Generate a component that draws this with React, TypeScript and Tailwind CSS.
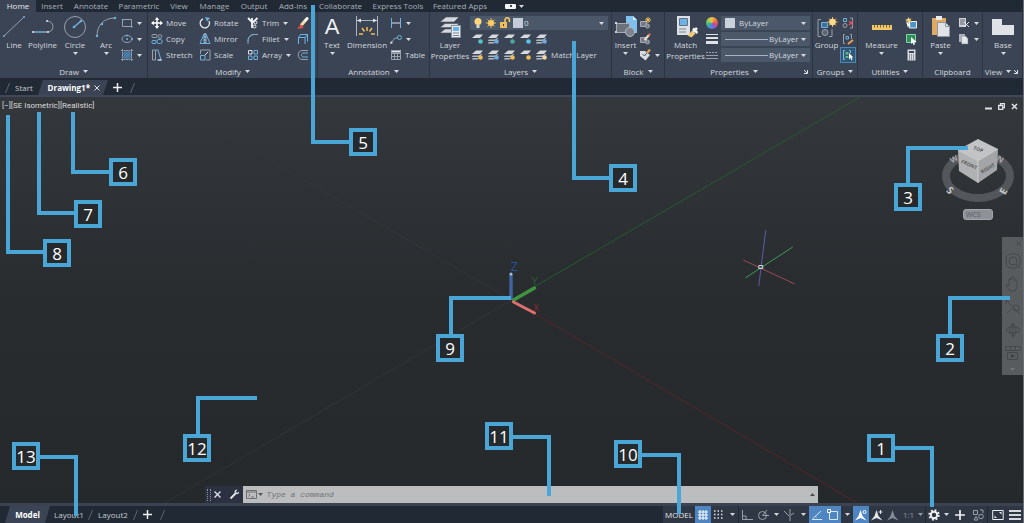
import React, { ReactNode } from 'react';

const BLUE = '#6fb3e0';
const LIGHT = '#dfe3e8';
const GREY = '#98a0ab';

interface IconProps {
  size?: number;
  w?: number;
  h?: number;
  children: ReactNode;
}

// Small wrapper, the viewBox always equals the drawn size
const Icon: React.FC<IconProps> = ({ size = 12, w, h, children }) => (
  <svg
    width={w ?? size}
    height={h ?? size}
    viewBox={`0 0 ${w ?? size} ${h ?? size}`}
    fill="none"
    stroke={LIGHT}
    strokeWidth={1}
    className="block shrink-0"
    aria-hidden="true"
  >
    {children}
  </svg>
);

const Caret: React.FC<{ className?: string }> = ({ className = '' }) => (
  <svg width="5" height="3" viewBox="0 0 5 3" className={`block shrink-0 ${className}`} aria-hidden="true">
    <path d="M0 0h5L2.5 3z" fill="#d5d9de" />
  </svg>
);

/* ---------- Draw ---------- */

const LineIcon = () => (
  <Icon size={24}>
    <path d="M2 21L22 2" stroke={GREY} />
    <circle cx="2" cy="21" r="1" fill={BLUE} stroke="none" />
    <circle cx="22" cy="2" r="1" fill={BLUE} stroke="none" />
  </Icon>
);

const PolylineIcon = () => (
  <Icon size={24}>
    <path d="M2 17h16c6-2 5-11-2-11" stroke={GREY} />
    <path d="M2 17h15" stroke={BLUE} />
    <circle cx="2" cy="17" r="1" fill={LIGHT} stroke="none" />
    <circle cx="16" cy="6" r="1" fill={LIGHT} stroke="none" />
    <circle cx="17" cy="17" r="1" fill={LIGHT} stroke="none" />
  </Icon>
);

const CircleIcon = () => (
  <Icon size={24}>
    <circle cx="12" cy="12" r="10.5" stroke={GREY} />
    <path d="M11 12l7-6" stroke={BLUE} strokeWidth="1.5" />
    <circle cx="11" cy="12" r="1.3" fill={BLUE} stroke="none" />
    <circle cx="18" cy="6" r="1.3" fill={BLUE} stroke="none" />
  </Icon>
);

const ArcIcon = () => (
  <Icon size={24}>
    <path d="M3 21C3 10 10 3 21 3" stroke={GREY} />
    <circle cx="3" cy="21" r="1.2" fill={BLUE} stroke="none" />
    <circle cx="8" cy="9" r="1.2" fill={BLUE} stroke="none" />
    <circle cx="21" cy="3" r="1.2" fill={BLUE} stroke="none" />
  </Icon>
);

const RectIcon = () => (
  <Icon>
    <path d="M1.5 2.5h9v7h-9z" stroke={GREY} />
    <path d="M1 2h1.5v1.5H1zM10 9h1.5v1.5H10z" fill={BLUE} stroke="none" />
  </Icon>
);

const EllipseIcon = () => (
  <Icon>
    <ellipse cx="6" cy="6" rx="5" ry="3.5" stroke={GREY} />
    <circle cx="6" cy="6" r="1" fill={BLUE} stroke="none" />
    <circle cx="11" cy="6" r="1" fill={BLUE} stroke="none" />
    <circle cx="6" cy="2.5" r="1" fill={BLUE} stroke="none" />
  </Icon>
);

const HatchIcon = () => (
  <Icon>
    <path d="M2.500 2.500h7v7h-7z" fill="#3f6d94" stroke="none" />
    <path d="M1.5 0v12M10.5 0v12M0 1.5h12M0 10.5h12" stroke={GREY} strokeDasharray="2 .5" />
    <path d="M2 5l3-3M2 8l6-6M2 10.5L10 2.500M4 10.500L10.500 4M7 10.500L10.500 7" stroke="#5c9bcb" strokeWidth=".7" />
  </Icon>
);

/* ---------- Modify ---------- */

const MoveIcon = () => (
  <Icon>
    <path d="M6 1v10M1 6h10" stroke="#fff" strokeWidth="1.5" />
    <path d="M6 0l2.200 3H3.800zM6 12l2.200-3H3.800zM0 6l3-2.200v4.400zM12 6L9 3.800v4.400z" fill="#fff" stroke="none" />
  </Icon>
);

const CopyIcon = () => (
  <Icon>
    <rect x="1" y="1.500" width="5" height="3" rx="1" stroke={GREY} />
    <rect x="1" y="7.500" width="4" height="3" rx="1" stroke={BLUE} />
    <circle cx="9" cy="3.500" r="1.800" stroke={GREY} />
    <rect x="6" y="6.500" width="5" height="4" rx="1.500" stroke={BLUE} />
  </Icon>
);

const StretchIcon = () => (
  <Icon>
    <path d="M1.500 1v10h3V1z" stroke={GREY} />
    <path d="M5 1l2 0 3 10H6" stroke={BLUE} />
    <path d="M7 11h4" stroke={LIGHT} />
  </Icon>
);

const RotateIcon = () => (
  <Icon>
    <path d="M4 1.800A4.700 4.700 0 1 0 10 4" stroke="#e7eaee" strokeWidth="1.300" />
    <path d="M6 0l5 1-3 3.500z" fill={BLUE} stroke="none" />
  </Icon>
);

const MirrorIcon = () => (
  <Icon>
    <path d="M5 1v9.500H1zM7 1v9.500h4z" stroke={BLUE} />
    <path d="M6 0v12" stroke={LIGHT} strokeDasharray="2 1" />
  </Icon>
);

const ScaleIcon = () => (
  <Icon>
    <path d="M1.500 5V1h9.500v10H7" stroke={GREY} />
    <path d="M1.500 6.500h4.500v4.500H1.500z" stroke={BLUE} />
    <path d="M6 6l3-3" stroke={LIGHT} />
  </Icon>
);

const TrimIcon = () => (
  <Icon>
    <path d="M1 1l4 4M5 1v10M10.500 1L5 6" stroke="#f2f4f6" strokeWidth="1.800" />
    <circle cx="8.500" cy="5.500" r="1.500" stroke="#f2f4f6" />
    <circle cx="7.500" cy="9.500" r="1.500" stroke="#f2f4f6" />
  </Icon>
);

const FilletIcon = () => (
  <Icon>
    <path d="M1 11V8c0-4 3-6.500 6-6.500h4" stroke={GREY} />
    <path d="M1 8c0-4 3-6.500 6-6.500" stroke={BLUE} />
  </Icon>
);

const ArrayIcon = () => (
  <Icon>
    <path d="M1.500 1.500h3.500v3.500H1.500z" stroke={LIGHT} />
    <path d="M7 1.500h3.500v3.500H7zM1.500 7h3.500v3.500H1.500zM7 7h3.500v3.500H7z" stroke={BLUE} />
  </Icon>
);

const EraseIcon = () => (
  <Icon>
    <path d="M4 8.500L10.500 1" stroke="#f4dfae" strokeWidth="3" />
    <path d="M8 4L11 .5" stroke="#fff" strokeWidth="2" />
    <path d="M0 11.500h5.500L6.500 9 4 7.500z" fill="#d9534a" stroke="none" />
  </Icon>
);

const ExplodeIcon = () => (
  <Icon>
    <path d="M1.500 4.500h6.500v6.500M1.500 4.500V11M1.500 4.500l2-3h7l-2.500 3M10.500 1.500v7" stroke={BLUE} />
  </Icon>
);

const OffsetIcon = () => (
  <Icon>
    <path d="M11 1.500H5c-5 0-5 9 0 9h6" stroke={GREY} />
    <path d="M11 4H6c-2 0-2 4 0 4h5" stroke={BLUE} />
  </Icon>
);

/* ---------- Annotation ---------- */

const DimensionIcon = () => (
  <Icon w={26} h={24}>
    <path d="M2.500 1v20M23.500 1v20M3 5.500h20" stroke="#aeb5be" />
    <path d="M3 5.500l4-2v4zM23 5.500l-4-2v4z" fill={LIGHT} stroke="none" />
    <path d="M13 12v4M8 13l2.500 3.500M18 13l-2.500 3.500M5 19l4 0M21 19l-4 0" stroke="#f2bd55" strokeWidth="1.500" />
  </Icon>
);

const LinearDimIcon = () => (
  <Icon>
    <path d="M1.500 1v10M10.500 1v10" stroke={BLUE} />
    <path d="M2 6h8" stroke={LIGHT} />
  </Icon>
);

const LeaderIcon = () => (
  <Icon>
    <path d="M1 10l4-5h3" stroke={GREY} />
    <circle cx="9.500" cy="4.500" r="2" stroke={BLUE} />
    <path d="M0 11l1-3 2 2z" fill={LIGHT} stroke="none" />
  </Icon>
);

const TableIcon = () => (
  <Icon>
    <path d="M1 1h10v2.500H1z" fill={LIGHT} stroke="none" />
    <path d="M1.500 1.500h9v9h-9zM1.500 4.500h9M1.500 7.500h9M4.500 4v6.500M7.500 4v6.500" stroke={GREY} />
  </Icon>
);

/* ---------- Layers ---------- */

const LayerPropsIcon = () => (
  <Icon size={24}>
    <path d="M2 18l5-4h14l-4 4zM2 12.500l5-4h14l-4 4zM2 7l6-5h13l-5 5z" fill="#d6d9dd" stroke="#4b5260" strokeWidth=".6" />
    <path d="M13.500 10.500h9v12h-9z" fill="#e9edf1" stroke="#8b939e" />
    <path d="M15 12h6v4h-6z" fill="#68b4e8" stroke="none" />
    <path d="M15 18h6M15 20.500h6" stroke="#7b838e" />
  </Icon>
);

const BulbIcon = () => (
  <Icon w={10} h={12}>
    <circle cx="5" cy="4.500" r="3.500" fill="#ffd67a" stroke="none" />
    <path d="M3.500 8h3v3h-3z" fill="#d8d8d8" stroke="none" />
  </Icon>
);

const SunIcon = () => (
  <Icon>
    <path d="M6 1v10M1 6h10M2.500 2.500l7 7M9.500 2.500l-7 7" stroke="#f2bd55" />
    <circle cx="6" cy="6" r="3" fill="#ffcf66" stroke="none" />
  </Icon>
);

const LockIcon = () => (
  <Icon>
    <path d="M6 5.500V3a2.200 2.200 0 0 1 4.400 0v2" stroke="#ffcf66" strokeWidth="1.500" />
    <path d="M1 5h7v6H1z" fill="#f2bd55" stroke="none" />
    <path d="M4 7h1v2H4z" fill="#3b4454" stroke="none" />
  </Icon>
);

const LayerIcon: React.FC<{ accent: string; stacked?: boolean }> = ({ accent, stacked }) => (
  <Icon>
    <path d="M0 5l4-3.500h7L8 5z" fill="#d6d9dd" stroke="none" />
    {stacked && <path d="M0 7.500l1-1h6l3-2v1L7.500 8H0zM0 10l1-1h5v1.500H0z" fill="#b4bac2" stroke="none" />}
    <circle cx="8.500" cy="8.500" r="2.300" fill={accent} stroke="none" />
  </Icon>
);

/* ---------- Block, Properties, Groups ... ---------- */

const InsertIcon = () => (
  <Icon size={24}>
    <path d="M12 1h7l4 4v13H12z" fill="#7fc1ee" stroke="none" />
    <path d="M19 1l4 4h-4z" fill="#d2ebfb" stroke="none" />
    <path d="M2.500 8.500h13v9h-13z" fill="#6d737d" stroke="#a6acb4" />
    <circle cx="16" cy="17" r="4.500" fill="#7d838c" stroke="#b6bbc2" />
    <path d="M1 7h2v2H1zM1 16h2v2H1z" fill="#d0d4d9" stroke="none" />
  </Icon>
);

const CreateBlockIcon = () => (
  <Icon>
    <path d="M1.500 4.500h6v5h-6z" fill="#747b86" stroke="#a6acb4" />
    <circle cx="8.500" cy="9" r="2" fill="#747b86" stroke="#a6acb4" />
    <path d="M9 0v6M6 3h6M7 1l4 4M11 1L7 5" stroke="#f2bd55" />
  </Icon>
);

const EditBlockIcon = () => (
  <Icon>
    <path d="M1.500 4.500h6v5h-6z" fill="#747b86" stroke="#a6acb4" />
    <circle cx="8.500" cy="9" r="2" fill="#747b86" stroke="#a6acb4" />
    <path d="M5.500 7L10 2" stroke="#f1e3c8" strokeWidth="2" />
    <path d="M9.500 2.500L11.200.7" stroke="#e0704a" strokeWidth="2" />
  </Icon>
);

const TagIcon = () => (
  <Icon>
    <path d="M1 2h5l5 4-4.500 5.500L1 7z" fill="#d9dde2" stroke="none" />
    <path d="M3.500 5l2 2 3-4" stroke="#4a515e" />
    <path d="M8 4l3-3.500" stroke="#f2a94b" strokeWidth="2" />
  </Icon>
);

const MatchPropsIcon = () => (
  <Icon size={24}>
    <path d="M3 1h13v19H3z" fill="#dde1e5" stroke="none" />
    <path d="M5.500 3.500h8v7h-8z" fill="#6ab3e6" stroke="#66707c" />
    <path d="M5 14h7M5 17h7" stroke="#7b838e" />
    <path d="M18 18l5-5M19 13.500l4.500 4.500" stroke="#f3f3f3" strokeWidth="2.500" />
    <path d="M13.500 20.500l5-5 3 3-4 4z" fill="#f0c878" stroke="none" />
  </Icon>
);

const WheelIcon = () => (
  <span className="block size-3 rounded-full bg-[conic-gradient(#f2c14b,#ec7b3c,#d94b7b,#8a5bd0,#3f8fe0,#3fb98a,#a9cf4a,#f2c14b)]" />
);

const WeightIcon = () => (
  <Icon>
    <path d="M0 1.500h12" strokeWidth="1" />
    <path d="M0 5h12" strokeWidth="2" />
    <path d="M0 9.500h12" strokeWidth="3" />
  </Icon>
);

const LinetypeIcon = () => (
  <Icon>
    <path d="M0 3.500h12" strokeDasharray="2 1" stroke={GREY} />
    <path d="M0 6.500h12M0 9.500h12" stroke={GREY} />
  </Icon>
);

const GroupIcon = () => (
  <Icon size={24}>
    <path d="M6 4.500H3v17h3M14 21.500h3V14" stroke={GREY} />
    <path d="M6.500 7.500h6v5h-6z" fill="#3d6f9c" stroke={BLUE} />
    <circle cx="10" cy="17.500" r="3" fill="#5d6470" stroke={GREY} />
    <path d="M17.500 2v10M12.500 7h10M14 3.500l7 7M21 3.500l-7 7" stroke="#f2bd55" />
    <circle cx="17.500" cy="7" r="3.300" fill="#ffd98a" stroke="none" />
  </Icon>
);

const UngroupIcon = () => (
  <Icon>
    <path d="M1.500 1.500h3v3h-3z" stroke={BLUE} />
    <circle cx="3" cy="8.500" r="2" stroke={GREY} />
    <path d="M8 1h2.500v10H8" stroke={GREY} />
    <path d="M7 4l4 4M11 4L7 8" stroke="#e0525c" strokeWidth="1.300" />
  </Icon>
);

const GroupEditIcon = () => (
  <Icon>
    <path d="M3 1.500H1.500v9H3M8 1.500h1.500V6" stroke={GREY} />
    <path d="M4 3.500h2.500V6H4z" stroke={BLUE} />
    <path d="M6 11l5-4" stroke="#e69a5a" strokeWidth="2" />
  </Icon>
);

const GroupSelectIcon = () => (
  <Icon>
    <path d="M3 1.500H1.500v9H3M7 1.500h1.500V4" stroke="#8fb9d6" />
    <path d="M3.500 3h3v2.500h-3zM3.500 7h3v2h-3z" fill="#5cba8a" stroke="none" />
    <path d="M7 4l4.500 4.500H9.500l1 2.500-1 .5-1-2.500L7 10.500z" fill="#fff" stroke="none" />
  </Icon>
);

const MeasureIcon = () => (
  <Icon w={24} h={24}>
    <path d="M2 10h20v5H2z" fill="#f2c766" stroke="none" />
    <path d="M4.500 10v2.500M7.500 10v2.500M10.500 10v2.500M13.500 10v2.500M16.500 10v2.500M19.500 10v2.500" stroke="#7a6330" />
  </Icon>
);

const QuickSelectIcon = () => (
  <Icon>
    <path d="M4.500 4.500h7v6.500h-7z" fill="#4b95c9" stroke="#eef0f3" />
    <path d="M1 4l5 4.500H4l-1 2.500z" fill="#fff" stroke="none" />
    <path d="M3.500 0l1 2 2-.5L5.500 3.500l1.500 2-2.500-.5L3 6.500l-.5-2.500L0 3l2.500-1z" fill="#f5cf78" stroke="none" />
  </Icon>
);

const SelectAllIcon = () => (
  <Icon>
    <path d="M1.500 1.500h9v8h-9z" fill="#2f8f58" stroke="#7fd6a1" />
    <path d="M6 4l5.500 5H9l1 2.500-1.500.5-1-2.500L6 11z" fill="#fff" stroke="none" />
  </Icon>
);

const CalcIcon = () => (
  <Icon>
    <path d="M2.500.5h8v11h-8z" fill="#d9dde2" stroke="none" />
    <path d="M4 2h5v2H4z" fill="#3f4856" stroke="none" />
    <path d="M4 6h5M4 8h5M4 10h5" stroke="#4a515e" strokeDasharray="1 1" />
  </Icon>
);

const PasteIcon = () => (
  <Icon size={24}>
    <path d="M3 3h14v17H3z" fill="#e0aa62" stroke="none" />
    <path d="M7 1h6v4H7z" fill="#e7eaee" stroke="none" />
    <path d="M8.500 7.500h8l4 4v10h-12z" fill="#dfe2e6" stroke="#8f969f" />
    <path d="M16.500 7.500v4h4" stroke="#8f969f" />
  </Icon>
);

const CutIcon = () => (
  <Icon>
    <path d="M1 1h7v9H1z" fill="#cfd3d8" stroke="none" />
    <path d="M2 3h5M2 5h5M2 7h5" stroke="#5a616d" />
    <path d="M6 5l5 5M11 5l-5 5" stroke="#eef0f3" />
  </Icon>
);

const CopyClipIcon = () => (
  <Icon>
    <path d="M1 1h6v8H1z" fill="#aeb4bc" stroke="none" />
    <path d="M3.500 3h4l2.500 2.500V11H3.500z" fill="#e3e6ea" stroke="#6b727d" strokeWidth=".5" />
  </Icon>
);

const BaseIcon = () => (
  <Icon size={24}>
    <path d="M1 4h10v6h12v10H1z" fill="#dfe2e6" stroke="none" />
  </Icon>
);

/* ---------- Ribbon building blocks ---------- */

interface BigButtonProps {
  icon: ReactNode;
  label: string;
  second?: string;
  caret?: boolean;
  className?: string;
}

const BigButton: React.FC<BigButtonProps> = ({ icon, label, second, caret, className = '' }) => (
  <button type="button" className={`flex shrink-0 flex-col items-center leading-[11px] whitespace-nowrap ${className}`}>
    {icon}
    <span>{label}</span>
    {second && <span>{second}</span>}
    {caret && <Caret className="mt-0.5" />}
  </button>
);

interface ToolProps {
  icon: ReactNode;
  name: string;
  label?: string;
  caret?: boolean;
}

const Tool: React.FC<ToolProps> = ({ icon, name, label, caret }) => (
  <button type="button" aria-label={name} className="flex h-4 items-center gap-[3px] whitespace-nowrap">
    {icon}
    {label && <span>{label}</span>}
    {caret && <Caret className="ml-px" />}
  </button>
);

interface PanelProps {
  title: string;
  caret?: boolean;
  launcher?: boolean;
  className: string;
  children: ReactNode;
}

const Panel: React.FC<PanelProps> = ({ title, caret = true, launcher, className, children }) => (
  <section className={`flex flex-col border-r border-[#2c3441] ${className}`}>
    <div className="flex h-[53px] pt-[3px]">{children}</div>
    <div className="flex h-[13px] items-center">
      <button type="button" className="flex flex-1 items-center justify-center gap-1">
        {title}
        {caret && <Caret />}
      </button>
      {launcher && (
        <button type="button" aria-label={`${title} settings`} className="mr-1">
          <Icon size={5}>
            <path d="M1 1l3 3M4.500 1v3.500H1" />
          </Icon>
        </button>
      )}
    </div>
  </section>
);

interface PropertySelectProps {
  name: string;
  className: string;
  children?: ReactNode;
}

const PropertySelect: React.FC<PropertySelectProps> = ({ name, className, children }) => (
  <label className="relative flex h-4 items-center">
    <select
      aria-label={name}
      className={`h-[14px] w-full appearance-none bg-[#4b586a] text-[8px] leading-[14px] outline-none ${className}`}
    >
      <option>ByLayer</option>
    </select>
    {children}
    <Caret className="pointer-events-none absolute right-1" />
  </label>
);

const menuTabs: { name: string; className: string }[] = [
  { name: 'Insert', className: 'w-[32px]' },
  { name: 'Annotate', className: 'w-[46px]' },
  { name: 'Parametric', className: 'w-[50px]' },
  { name: 'View', className: 'w-[30px]' },
  { name: 'Manage', className: 'w-[41px]' },
  { name: 'Output', className: 'w-[38px]' },
  { name: 'Add-ins', className: 'w-[40px]' },
  { name: 'Collaborate', className: 'w-[55px]' },
  { name: 'Express Tools', className: 'w-[60px]' },
  { name: 'Featured Apps', className: 'w-[64px]' },
];

const MenuTabs = () => (
  <nav className="flex h-3 items-center bg-[#212934] text-[#a9b0ba]">
    <a href="#home" className="flex h-3 w-9 items-center justify-center bg-[#3b4454] text-[#e6e9ed]">
      Home
    </a>
    {menuTabs.map((tab) => (
      <a key={tab.name} href={`#${tab.name}`} className={`text-center whitespace-nowrap ${tab.className}`}>
        {tab.name}
      </a>
    ))}
    <button type="button" aria-label="Ribbon display" className="ml-[13px] flex items-center gap-[3px]">
      <span className="flex h-[5px] w-[11px] items-center justify-center rounded-[1px] bg-[#f2f4f6]">
        <span className="size-[2px] bg-[#3b4454]" />
      </span>
      <Caret />
    </button>
  </nav>
);

const Ribbon = () => (
  <div className="flex h-[66px] bg-[#3b4454] text-[#d3d8de]">
    <Panel title="Draw" className="w-[148px]">
      <BigButton icon={<LineIcon />} label="Line" className="w-7" />
      <BigButton icon={<PolylineIcon />} label="Polyline" className="w-[29px]" />
      <BigButton icon={<CircleIcon />} label="Circle" caret className="w-9" />
      <BigButton icon={<ArcIcon />} label="Arc" caret className="w-[26px]" />
      <div className="ml-0.5 flex flex-col">
        <Tool icon={<RectIcon />} name="Rectangle" caret />
        <Tool icon={<EllipseIcon />} name="Ellipse" caret />
        <Tool icon={<HatchIcon />} name="Hatch" caret />
      </div>
    </Panel>

    <Panel title="Modify" className="w-[170px]">
      <div className="ml-[3px] grid grid-cols-[48px_48px_50px_12px] content-start">
        <Tool icon={<MoveIcon />} name="Move" label="Move" />
        <Tool icon={<RotateIcon />} name="Rotate" label="Rotate" />
        <Tool icon={<TrimIcon />} name="Trim" label="Trim" caret />
        <Tool icon={<EraseIcon />} name="Erase" />
        <Tool icon={<CopyIcon />} name="Copy" label="Copy" />
        <Tool icon={<MirrorIcon />} name="Mirror" label="Mirror" />
        <Tool icon={<FilletIcon />} name="Fillet" label="Fillet" caret />
        <Tool icon={<ExplodeIcon />} name="Explode" />
        <Tool icon={<StretchIcon />} name="Stretch" label="Stretch" />
        <Tool icon={<ScaleIcon />} name="Scale" label="Scale" />
        <Tool icon={<ArrayIcon />} name="Array" label="Array" caret />
        <Tool icon={<OffsetIcon />} name="Offset" />
      </div>
    </Panel>

    <Panel title="Annotation" className="w-[112px]">
      <BigButton
        icon={<span className="h-6 font-['Liberation_Sans',sans-serif] text-[22px] leading-6 text-[#eef0f3]">A</span>}
        label="Text"
        caret
        className="w-7"
      />
      <BigButton icon={<DimensionIcon />} label="Dimension" className="w-[42px]" />
      <div className="ml-0.5 flex flex-col">
        <Tool icon={<LinearDimIcon />} name="Linear" caret />
        <Tool icon={<LeaderIcon />} name="Leader" caret />
        <Tool icon={<TableIcon />} name="Table" label="Table" />
      </div>
    </Panel>

    <Panel title="Layers" className="w-[182px]">
      <BigButton icon={<LayerPropsIcon />} label="Layer" second="Properties" className="w-10" />
      <div className="mr-[3px] flex flex-1 flex-col">
        <label className="relative flex h-4 items-center">
          <select
            aria-label="Current layer"
            className="h-[14px] w-full appearance-none bg-[#4b586a] pl-[54px] text-[8px] leading-[14px] outline-none"
          >
            <option>0</option>
          </select>
          <span className="pointer-events-none absolute left-[3px] flex items-center gap-[2px]">
            <BulbIcon />
            <SunIcon />
            <LockIcon />
            <span className="size-[10px] bg-[#c3ccd8]" />
          </span>
          <Caret className="pointer-events-none absolute right-1" />
        </label>
        <div className="ml-0.5 flex gap-1">
          <Tool icon={<LayerIcon accent="#56c5c9" />} name="Layer off" />
          <Tool icon={<LayerIcon accent="#6fa9dc" stacked />} name="Isolate" />
          <Tool icon={<LayerIcon accent="#4fa89c" />} name="Freeze" />
          <Tool icon={<LayerIcon accent="#56c5e9" />} name="Lock" />
          <Tool icon={<LayerIcon accent="#6fa9dc" stacked />} name="Make current" />
        </div>
        <div className="ml-0.5 flex gap-1">
          <Tool icon={<LayerIcon accent="#f2bd55" stacked />} name="Layers on" />
          <Tool icon={<LayerIcon accent="#6fa9dc" stacked />} name="Unisolate" />
          <Tool icon={<LayerIcon accent="#f2bd55" stacked />} name="Thaw" />
          <Tool icon={<LayerIcon accent="#f2bd55" />} name="Unlock" />
          <Tool icon={<LayerIcon accent="#f0d9a0" stacked />} name="Match Layer" label="Match Layer" />
        </div>
      </div>
    </Panel>

    <Panel title="Block" className="w-[53px]">
      <BigButton icon={<InsertIcon />} label="Insert" caret className="w-[27px]" />
      <div className="flex flex-col">
        <Tool icon={<CreateBlockIcon />} name="Create block" />
        <Tool icon={<EditBlockIcon />} name="Edit block" />
        <Tool icon={<TagIcon />} name="Edit attributes" caret />
      </div>
    </Panel>

    <Panel title="Properties" launcher className="w-[148px]">
      <BigButton icon={<MatchPropsIcon />} label="Match" second="Properties" className="w-[41px]" />
      <div className="grid flex-1 grid-cols-[15px_1fr] content-start items-center pr-0.5">
        <WheelIcon />
        <PropertySelect name="Object color" className="pl-[18px]">
          <span className="pointer-events-none absolute left-1 size-[10px] bg-[#cbd2dc]" />
        </PropertySelect>
        <WeightIcon />
        <PropertySelect name="Lineweight" className="pl-12">
          <span className="pointer-events-none absolute left-1 h-px w-[43px] bg-[#aab2bd]" />
        </PropertySelect>
        <LinetypeIcon />
        <PropertySelect name="Linetype" className="pl-12">
          <span className="pointer-events-none absolute left-1 h-px w-[43px] bg-[#aab2bd]" />
        </PropertySelect>
      </div>
    </Panel>

    <Panel title="Groups" className="w-[45px]">
      <BigButton icon={<GroupIcon />} label="Group" className="w-[27px]" />
      <div className="flex flex-col items-center">
        <Tool icon={<UngroupIcon />} name="Ungroup" />
        <Tool icon={<GroupEditIcon />} name="Group edit" />
        <button
          type="button"
          aria-label="Group selection"
          className="flex size-4 items-center justify-center border border-[#4d87b3] bg-[#2f5878]"
        >
          <GroupSelectIcon />
        </button>
      </div>
    </Panel>

    <Panel title="Utilities" className="w-[65px]">
      <BigButton icon={<MeasureIcon />} label="Measure" caret className="w-[47px]" />
      <div className="flex flex-col">
        <Tool icon={<QuickSelectIcon />} name="Quick select" />
        <Tool icon={<SelectAllIcon />} name="Select all" />
        <Tool icon={<CalcIcon />} name="Calculator" />
      </div>
    </Panel>

    <Panel title="Clipboard" caret={false} className="w-[60px]">
      <BigButton icon={<PasteIcon />} label="Paste" caret className="w-[35px]" />
      <div className="flex flex-col">
        <Tool icon={<CutIcon />} name="Cut" caret />
        <Tool icon={<CopyClipIcon />} name="Copy clip" caret />
      </div>
    </Panel>

    <Panel title="View" launcher className="min-w-10 flex-1">
      <BigButton icon={<BaseIcon />} label="Base" caret className="w-10" />
    </Panel>
  </div>
);

const Slash = () => (
  <Icon w={5} h={12}>
    <path d="M4.500 1L.5 11" stroke="#5d6573" />
  </Icon>
);

const PlusIcon = () => (
  <Icon size={9}>
    <path d="M4.500 0v9M0 4.500h9" stroke="#eef0f3" strokeWidth="1.500" />
  </Icon>
);

const FileTabs = () => (
  <div className="flex h-[19px] items-center border-b-2 border-[#40475a] bg-[#212934] pt-0.5 text-[#c5cad1]">
    <span className="ml-[5px]">
      <Slash />
    </span>
    <button type="button" className="w-7 text-center">
      Start
    </button>
    <div className="flex h-[15px] w-[70px] items-center justify-end gap-1 bg-[#3b4454] pr-2 [clip-path:polygon(5px_0,100%_0,calc(100%-5px)_100%,0_100%)]">
      <button type="button" className="font-bold text-white">
        Drawing1*
      </button>
      <button type="button" aria-label="Close drawing">
        <Icon size={6}>
          <path d="M.5.5l5 5M5.500.5l-5 5" />
        </Icon>
      </button>
    </div>
    <button type="button" aria-label="New drawing" className="mr-2 ml-[5px]">
      <PlusIcon />
    </button>
    <Slash />
  </div>
);

/* ---------- Drawing area ---------- */

const Scene = () => (
  <svg viewBox="0 97 1024 406" preserveAspectRatio="none" className="absolute inset-0 size-full" fill="none" aria-hidden="true">
    <path d="M512 300L160 97M512 300L165 503" stroke="#34393c" strokeWidth=".7" />
    <path d="M512 300L861 97" stroke="#245a2f" strokeWidth="1" />
    <path d="M512 300L858 503" stroke="#57242b" strokeWidth="1" />
    <path d="M511.500 300v-26" stroke="#41639f" strokeWidth="3.500" />
    <circle cx="511.500" cy="274" r="1.500" fill="#a9bfe0" />
    <path d="M514 300l21-12" stroke="#3f9440" strokeWidth="3.500" strokeLinecap="round" />
    <path d="M514 302l21 11" stroke="#e06f70" strokeWidth="3" strokeLinecap="round" />
    <g fontFamily="Open Sans, sans-serif">
      <text x="511" y="271" fontSize="13" fill="#26529a">Z</text>
      <text x="532" y="285" fontSize="11" fill="#28602c">Y</text>
      <text x="534" y="311" fontSize="9" fill="#8c2a30">X</text>
    </g>
    <path d="M766.500 230l-7 56" stroke="#5c5ca8" />
    <path d="M746 278l47.500-31" stroke="#3f9a58" />
    <path d="M744 260l51.500 24" stroke="#9a4a55" />
    <path d="M759.500 265.500h4v3h-4z" stroke="#d4d6d8" />
  </svg>
);

const ViewCube = () => (
  <svg width="76" height="68" viewBox="0 0 76 68" fill="none" aria-label="View cube">
    <ellipse cx="38" cy="38" rx="32" ry="22" stroke="#53565a" strokeWidth="8" />
    <g fontFamily="Open Sans, sans-serif" fontWeight="700" fill="#a6a8ab">
      <text x="10" y="24" fontSize="8" transform="rotate(-30 14 21)">W</text>
      <text x="57" y="24" fontSize="8" transform="rotate(30 60 21)">N</text>
      <text x="7" y="56" fontSize="10" fill="#c4c6c8" transform="rotate(40 10 53)">S</text>
      <text x="60" y="57" fontSize="10" fill="#c4c6c8" transform="rotate(-60 63 53)">E</text>
    </g>
    <path d="M18 12L38 1l20 10-20 12z" fill="#c2c3c4" />
    <path d="M18 12l20 11v22L19 33z" fill="#b0b1b2" />
    <path d="M58 11L38 23v22l19-13z" fill="#a3a4a6" />
    <path d="M18 12l20 11 20-12M38 23v22" stroke="#d3d4d5" strokeWidth=".8" />
    <g fontFamily="Open Sans, sans-serif" fontWeight="700" fontSize="5" fill="#5a5c5f">
      <text x="33" y="13" transform="rotate(20 38 12)">TOP</text>
      <text x="20" y="28" transform="rotate(24 28 28)">FRONT</text>
      <text x="40" y="32" transform="rotate(-30 48 30)">RIGHT</text>
    </g>
  </svg>
);

const NavBar = () => (
  <div className="absolute top-[140px] right-0 flex h-[138px] w-[21px] flex-col items-center justify-between bg-[#595c5f] py-1">
    <button type="button" aria-label="Close navigation bar" className="self-end pr-0.5">
      <Icon size={5}>
        <path d="M.5.5l4 4M4.500.5l-4 4" stroke="#3f4245" />
      </Icon>
    </button>
    <button type="button" aria-label="Steering wheel">
      <Icon size={16}>
        <rect x="1" y="1" width="14" height="14" rx="5" stroke="#45484b" />
        <circle cx="8" cy="8" r="4" stroke="#45484b" />
        <path d="M11 11l4 4" stroke="#45484b" />
      </Icon>
    </button>
    <button type="button" aria-label="Pan">
      <Icon size={16}>
        <path d="M5 15c-2-3-4-5-4-6s2-1 3 1V4c0-1.500 2-1.500 2 0V2c0-1.500 2-1.500 2 0v1c0-1.500 2-1.500 2 0v2c0-1.500 2-1.500 2 0v6l-2 4z" stroke="#45484b" />
      </Icon>
    </button>
    <button type="button" aria-label="Zoom">
      <Icon size={16}>
        <path d="M1 1l14 14M1 5V1h4M2 14l4-4" stroke="#45484b" />
        <circle cx="11" cy="9" r="3" stroke="#45484b" />
      </Icon>
    </button>
    <button type="button" aria-label="Orbit">
      <Icon size={16}>
        <path d="M8 1v14M6 3l2-2 2 2M6 13l2 2 2-2" stroke="#45484b" />
        <ellipse cx="8" cy="8" rx="7" ry="3" stroke="#45484b" />
        <ellipse cx="8" cy="8" rx="3" ry="5" stroke="#45484b" />
      </Icon>
    </button>
    <button type="button" aria-label="Show motion">
      <Icon size={16}>
        <path d="M.5 1.500h15v4H.5zM5.500 1.500v4M10.500 1.500v4M2.500 7.500h10v7h-10z" stroke="#45484b" />
        <path d="M6 9l4 2-4 2z" fill="#3a3d40" stroke="none" />
      </Icon>
    </button>
    <Caret className="opacity-20" />
  </div>
);

const CommandLine = () => (
  <form className="absolute bottom-0 left-1/5 flex h-[17px] w-3/5 items-center bg-[#2b3140]">
    <span className="ml-0.5 h-3 w-1 border-x border-dotted border-[#8d949e]" />
    <button type="button" aria-label="Close command line" className="ml-[3px]">
      <Icon size={7}>
        <path d="M.5.5l6 6M6.500.5l-6 6" strokeWidth="1.300" />
      </Icon>
    </button>
    <button type="button" aria-label="Customize" className="ml-2">
      <Icon size={11}>
        <path d="M1.500 9.500l5-5" strokeWidth="2" />
        <path d="M10 2.500L8 4 6.800 2.800 8.500.8C6 0 4.800 2.500 6 4.500 8 6 10.500 5 10 2.500z" fill={LIGHT} stroke="none" />
      </Icon>
    </button>
    <label className="ml-[3px] flex h-full flex-1 items-center bg-[#bcbdbf] pl-[3px]">
      <Icon w={11} h={9}>
        <path d="M.5.5h10v8H.5z" stroke="#6c6e71" />
        <path d="M1 2h9M2.500 4l1.500 1.200L2.500 6.500M5 7h3" stroke="#6c6e71" />
      </Icon>
      <svg width="5" height="3" viewBox="0 0 5 3" className="ml-px" aria-hidden="true">
        <path d="M0 0h5L2.500 3z" fill="#55575a" />
      </svg>
      <input
        type="text"
        aria-label="Command"
        placeholder="Type a command"
        className="ml-1 min-w-0 flex-1 bg-transparent font-['Liberation_Mono',monospace] text-[8px] text-[#444] italic outline-none placeholder:text-[#737476]"
      />
      <svg width="5" height="3" viewBox="0 0 5 3" className="mr-[3px]" aria-hidden="true">
        <path d="M0 3h5L2.500 0z" fill="#4a4c4f" />
      </svg>
    </label>
  </form>
);

const Viewport = () => (
  <main className="relative min-h-[300px] flex-1 bg-linear-to-b from-[#34373b] via-[#282c2f] via-50% to-[#25292b]">
    <Scene />
    <div className="relative flex items-center justify-between px-0.5 pt-[3px] pr-[5px] text-[#d9dbdd]">
      <span className="font-['Roboto',sans-serif]">[−][SE Isometric][Realistic]</span>
      <div className="flex items-center gap-1.5">
        <button type="button" aria-label="Minimize">
          <Icon size={7}>
            <path d="M0 5.500h7" strokeWidth="2" />
          </Icon>
        </button>
        <button type="button" aria-label="Restore">
          <Icon size={7}>
            <path d="M2.500 2V.7h4v4H5M.7 2.500h4v4h-4z" strokeWidth="1.300" />
          </Icon>
        </button>
        <button type="button" aria-label="Close">
          <Icon size={7}>
            <path d="M1 1l5 5M6 1L1 6" strokeWidth="1.500" />
          </Icon>
        </button>
      </div>
    </div>
    <div className="absolute top-[41px] right-[7px] flex flex-col items-center gap-[3px]">
      <ViewCube />
      <button
        type="button"
        className="h-[11px] w-[30px] rounded-[3px] border border-[#a5a7ad] bg-[#8e9197] pl-0.5 text-left text-[7px] leading-[9px] text-[#5a5d63]"
      >
        WCS
      </button>
    </div>
    <NavBar />
    <CommandLine />
  </main>
);

/* ---------- Status bar ---------- */

interface StatusButtonProps {
  name: string;
  className?: string;
  active?: boolean;
  children: ReactNode;
}

const StatusButton: React.FC<StatusButtonProps> = ({ name, className = 'w-4', active, children }) => (
  <button
    type="button"
    aria-label={name}
    className={`flex h-full items-center justify-center ${className} ${active ? 'bg-[#4f86c2]' : ''}`}
  >
    {children}
  </button>
);

const AnnoIcon: React.FC<{ color: string; children?: ReactNode }> = ({ color, children }) => (
  <Icon>
    <path d="M5.500 1l2 6 4 4.500L5.500 9 0 11.500l3.500-4.500z" fill={color} stroke="none" />
    {children}
  </Icon>
);

const StatusBar = () => (
  <footer className="flex h-5 items-center border-t-[3px] border-[#3b4353] bg-[#212934] text-[#c5cad1]">
    <button
      type="button"
      className="ml-[5px] h-full w-[45px] bg-[#3b4454] text-center font-bold text-white [clip-path:polygon(5px_0,100%_0,calc(100%-5px)_100%,0_100%)]"
    >
      Model
    </button>
    <button type="button" className="w-[38px] text-center">
      Layout1
    </button>
    <Slash />
    <button type="button" className="w-10 text-center">
      Layout2
    </button>
    <Slash />
    <button type="button" aria-label="New layout" className="mr-2 ml-[5px]">
      <PlusIcon />
    </button>
    <Slash />

    <div className="ml-auto flex h-full items-center bg-[#2f3744]">
      <StatusButton name="Model space" className="w-8">
        <span className="text-[#e3e6ea]">MODEL</span>
      </StatusButton>
      <StatusButton name="Grid" active>
        <Icon>
          <path d="M3 1v10M6 1v10M9 1v10M1 3h10M1 6h10M1 9h10" stroke="#fff" />
        </Icon>
      </StatusButton>
      <StatusButton name="Snap">
        <Icon>
          <path d="M1 2h10M1 5.500h10M1 9h10" strokeWidth="1.500" strokeDasharray="1.500 2" />
        </Icon>
      </StatusButton>
      <StatusButton name="Snap options" className="w-[11px]">
        <Caret />
      </StatusButton>
      <StatusButton name="Ortho" className="w-[17px] border-l border-[#212934]">
        <Icon>
          <path d="M1.500 1v9.500H12M1.500 7H5v3.500" stroke={GREY} />
        </Icon>
      </StatusButton>
      <StatusButton name="Polar tracking">
        <Icon>
          <circle cx="5.500" cy="6.500" r="4" stroke={GREY} />
          <path d="M5.500 6.500H12M5.500 6.500L10 1" stroke={GREY} />
        </Icon>
      </StatusButton>
      <StatusButton name="Polar options" className="w-[10px]">
        <Caret />
      </StatusButton>
      <StatusButton name="Isometric drafting">
        <Icon>
          <path d="M7 0v12M1 2l5 5M8 6l3-2" stroke={GREY} />
        </Icon>
      </StatusButton>
      <StatusButton name="Isometric options" className="w-3">
        <Caret />
      </StatusButton>
      <StatusButton name="Object snap tracking" active>
        <Icon>
          <path d="M1 10.500h10M1.500 10L10 2" stroke="#d7e6f5" />
          <path d="M4 7l1.500 1.500" stroke="#d7e6f5" />
        </Icon>
      </StatusButton>
      <StatusButton name="Object snap" active>
        <Icon>
          <path d="M2.500 2.500h8v8h-8z" stroke="#d7e6f5" />
          <path d="M.5.5h3v3h-3z" fill="#4f86c2" stroke="#fff" />
        </Icon>
      </StatusButton>
      <StatusButton name="Object snap options" className="w-3">
        <Caret />
      </StatusButton>
      <StatusButton name="Annotation visibility" active>
        <AnnoIcon color="#fff">
          <circle cx="9.500" cy="3" r="1.500" stroke="#fff" />
        </AnnoIcon>
      </StatusButton>
      <StatusButton name="Auto scale">
        <AnnoIcon color="#e3e6ea">
          <path d="M9.500 1v4M7.500 3h4" />
        </AnnoIcon>
      </StatusButton>
      <StatusButton name="Annotation">
        <AnnoIcon color="#858d98" />
      </StatusButton>
      <StatusButton name="Annotation scale" className="w-6 gap-1">
        <span className="text-[#8d95a1]">1:1</span>
        <Caret className="opacity-60" />
      </StatusButton>
      <StatusButton name="Workspace switching" className="w-4 border-l border-[#212934]">
        <Icon>
          <circle cx="6" cy="6" r="3.200" strokeWidth="2" stroke="#eef0f3" />
          <circle cx="6" cy="6" r="4.800" strokeWidth="1.800" stroke="#eef0f3" strokeDasharray="1.900 1.870" />
        </Icon>
      </StatusButton>
      <StatusButton name="Workspace options" className="w-[11px]">
        <Caret />
      </StatusButton>
      <StatusButton name="Annotation monitor">
        <Icon size={10}>
          <path d="M5 0v10M0 5h10" strokeWidth="1.700" stroke="#eef0f3" />
        </Icon>
      </StatusButton>
      <StatusButton name="Isolate objects" className="w-[19px]">
        <Icon>
          <path d="M1.500 1.500h4v4h-4zM6 11l-4 0 2-3.500z" stroke={GREY} />
          <circle cx="9" cy="7.500" r="2.300" stroke={GREY} />
          <path d="M8 1h3v3" stroke={GREY} />
        </Icon>
      </StatusButton>
      <StatusButton name="Clean screen" className="w-5 border-l border-[#212934]">
        <Icon>
          <path d="M.7 1.500h10.500v9H.7z" stroke="#eef0f3" />
          <path d="M7 3h2.500v2.500zM5 9H2.500V6.500z" fill="#eef0f3" stroke="none" />
        </Icon>
      </StatusButton>
      <StatusButton name="Customization">
        <Icon>
          <path d="M0 2h12M0 6h12M0 10h12" strokeWidth="2" stroke="#d5d9de" />
        </Icon>
      </StatusButton>
    </div>
  </footer>
);

/* ---------- Numbered callouts pinned over the window ---------- */

const callouts: { n: number; left: number; top: number; leader: string }[] = [
  { n: 1, left: 867, top: 434, leader: 'M895 448H932V507' },
  { n: 2, left: 936, top: 334, leader: 'M950 334V298H1010' },
  { n: 3, left: 894, top: 183, leader: 'M908 183V148H968' },
  { n: 4, left: 609, top: 164, leader: 'M609 178H574V41' },
  { n: 5, left: 349, top: 128, leader: 'M349 142H313V5' },
  { n: 6, left: 109, top: 158, leader: 'M109 172H73V112' },
  { n: 7, left: 74, top: 200, leader: 'M74 213H39V112' },
  { n: 8, left: 43, top: 239, leader: 'M43 252H8V115' },
  { n: 9, left: 436, top: 334, leader: 'M451 334V298H511' },
  { n: 10, left: 614, top: 440, leader: 'M642 455H679V514' },
  { n: 11, left: 485, top: 422, leader: 'M513 437H549V496' },
  { n: 12, left: 183, top: 434, leader: 'M198 434V398H257' },
  { n: 13, left: 12, top: 442, leader: 'M40 457H76V516' },
];

const Callouts = () => (
  <div className="pointer-events-none absolute inset-0 overflow-hidden">
    <svg className="absolute inset-0 size-full" fill="none" stroke="#4ba6d8" strokeWidth="4" aria-hidden="true">
      {callouts.map((c) => (
        <path key={c.n} d={c.leader} />
      ))}
    </svg>
    {callouts.map((c) => (
      <span
        key={c.n}
        className="absolute flex size-7 items-center justify-center border-4 border-[#4ba6d8] bg-[#262a2d] text-[17px] leading-none text-white"
        style={{ left: c.left, top: c.top }}
      >
        {c.n}
      </span>
    ))}
  </div>
);

const App: React.FC = () => (
  <div className="relative flex min-h-screen flex-col overflow-hidden border-r border-[#6b6e74] bg-[#212934] font-['Open_Sans',sans-serif] text-[8px] leading-3">
    <MenuTabs />
    <Ribbon />
    <FileTabs />
    <Viewport />
    <StatusBar />
    <Callouts />
  </div>
);

export default App;
